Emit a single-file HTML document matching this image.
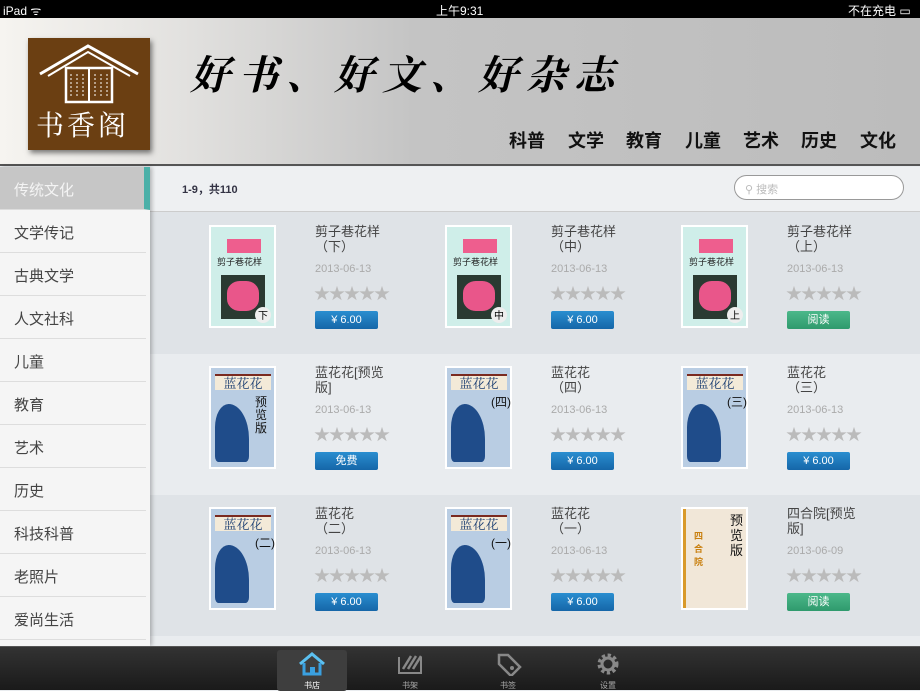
<!DOCTYPE html>
<html><head><meta charset="utf-8"><style>
*{margin:0;padding:0;box-sizing:border-box}
body{width:920px;height:690px;overflow:hidden;position:relative;font-family:"Liberation Sans","Noto Sans CJK SC",sans-serif;background:#e9ecef}
.abs{position:absolute}
#status{left:0;top:0;width:920px;height:18px;background:#000;color:#fff;font-size:12px}
#header{left:0;top:18px;width:920px;height:148px;background:linear-gradient(90deg,#f6f4f0 0%,#e2e1df 20%,#c4c4c4 45%,#bcbcbc 100%);border-bottom:2px solid #555}
.nav{font-size:18px;color:#111;top:112px;font-weight:bold;white-space:nowrap;line-height:22px}
#side{left:0;top:167px;width:150px;height:479px;background:#f5f5f5;box-shadow:2px 0 4px rgba(0,0,0,.25)}
.si{position:absolute;left:0;width:146px;height:43px;border-bottom:1px solid #ddd;font-size:15px;color:#444;padding:12px 0 0 14px}
.row{position:absolute;left:150px;width:770px}
.cov{position:absolute;width:67px;height:103px;background:#fff;padding:2px}
.tt{position:absolute;font-size:13px;color:#444;line-height:15px;width:80px}
.dt{position:absolute;font-size:11px;color:#aaa}
.st{position:absolute;font-size:16px;color:#bbb;letter-spacing:-1px}
.bt{position:absolute;width:63px;height:18px;border-radius:2px;background:linear-gradient(#2a8ed0,#1566a8);color:#fff;font-size:11px;text-align:center;line-height:18px}
.bt.g{background:linear-gradient(#4cb88a,#2f9a6d)}
#tab{left:0;top:646px;width:920px;height:44px;background:linear-gradient(#333,#1a1a1a);border-top:1px solid #555}
.tl{position:absolute;top:33px;font-size:8px;color:#aaa}
</style></head><body>
<div id="status" class="abs"><span class="abs" style="left:3px;top:2px">iPad ᯤ</span><span class="abs" style="left:436px;top:2px">上午9:31</span><span class="abs" style="left:848px;top:2px">不在充电 ▭</span></div>
<div id="header" class="abs">
<div class="abs" style="left:28px;top:20px;width:122px;height:112px;background:#6b3f12;box-shadow:2px 3px 5px rgba(0,0,0,.5)">
<svg width="122" height="112" viewBox="0 0 122 112"><path d="M12 36 L60 8 L110 36" fill="none" stroke="#fff" stroke-width="3"/><path d="M20 38 L60 14 L102 38" fill="none" stroke="#fff" stroke-width="2"/><rect x="38" y="30" width="46" height="34" fill="none" stroke="#fff" stroke-width="2.5"/><line x1="61" y1="30" x2="61" y2="64" stroke="#fff" stroke-width="2"/><path d="M43 36v24M49 36v24M55 36v24M67 36v24M73 36v24M79 36v24" stroke="#fff" stroke-width="1" stroke-dasharray="2 2"/></svg>
<span class="abs" style="left:8px;top:70px;font-size:28px;line-height:32px;color:#fff;font-family:'Noto Serif CJK SC',serif;letter-spacing:3px">书香阁</span></div>
<div class="abs" style="left:190px;top:26px;font-size:40px;color:#000;font-family:'Noto Serif CJK SC',serif;letter-spacing:8px;font-style:italic;font-weight:bold">好书、好文、好杂志</div>
<span class="abs nav" style="left:509px">科普</span><span class="abs nav" style="left:568px">文学</span><span class="abs nav" style="left:626px">教育</span><span class="abs nav" style="left:685px">儿童</span><span class="abs nav" style="left:743px">艺术</span><span class="abs nav" style="left:801px">历史</span><span class="abs nav" style="left:860px">文化</span>
</div>
<div class="abs" style="left:150px;top:167px;width:770px;height:45px;background:#eef0f2;border-bottom:1px solid #ccc"><span class="abs" style="left:32px;top:14px;font-size:11px;font-weight:bold;color:#334">1-9，共110</span>
<div class="abs" style="left:584px;top:8px;width:170px;height:25px;border:1px solid #999;border-radius:13px;background:#fff;font-size:11px;color:#bbb;padding:5px 0 0 10px">⚲ 搜索</div></div>
<div class="row" style="top:212px;height:142px;background:#dfe3e7"></div>
<div class="row" style="top:354px;height:141px;background:#e9ecef"></div>
<div class="row" style="top:495px;height:141px;background:#dfe3e7"></div>
<div class="row" style="top:636px;height:10px;background:#e9ecef"></div>
<div id="side" class="abs">
<div class="si" style="top:0;background:#c6c6c6;color:#f4f4f4;width:150px;border-right:6px solid #4bb0a8">传统文化</div>
<div class="si" style="top:43px">文学传记</div><div class="si" style="top:86px">古典文学</div><div class="si" style="top:129px">人文社科</div><div class="si" style="top:172px">儿童</div><div class="si" style="top:215px">教育</div><div class="si" style="top:258px">艺术</div><div class="si" style="top:301px">历史</div><div class="si" style="top:344px">科技科普</div><div class="si" style="top:387px">老照片</div><div class="si" style="top:430px">爱尚生活</div>
</div>
<div id="books"></div>
<script>
var data=[
["剪子巷花样<br>（下）","2013-06-13","¥ 6.00",0,"下"],["剪子巷花样<br>（中）","2013-06-13","¥ 6.00",0,"中"],["剪子巷花样<br>（上）","2013-06-13","阅读",0,"上"],
["蓝花花[预览<br>版]","2013-06-13","免费",1,"预览版"],["蓝花花<br>（四）","2013-06-13","¥ 6.00",1,"(四)"],["蓝花花<br>（三）","2013-06-13","¥ 6.00",1,"(三)"],
["蓝花花<br>（二）","2013-06-13","¥ 6.00",1,"(二)"],["蓝花花<br>（一）","2013-06-13","¥ 6.00",1,"(一)"],["四合院[预览<br>版]","2013-06-09","阅读",2,"预览版"]];
var h="";
data.forEach(function(d,i){var x=209+(i%3)*236,y=225+Math.floor(i/3)*141;
var c;
if(d[3]==0)c='<div style="width:63px;height:99px;background:#cfeee9;position:relative"><div style="position:absolute;left:16px;top:12px;width:34px;height:14px;background:#ee5e8e"></div><div style="position:absolute;left:6px;top:28px;font-size:9px;color:#222">剪子巷花样</div><div style="position:absolute;left:10px;top:48px;width:44px;height:44px;background:#2a3a32"><div style="margin:6px;width:32px;height:30px;background:#e9568a;border-radius:40%"></div></div><div style="position:absolute;left:44px;top:80px;width:16px;height:16px;border-radius:8px;background:#eee;font-size:10px;text-align:center">'+d[4]+'</div></div>';
else if(d[3]==1)c='<div style="width:63px;height:99px;background:#b9cde3;position:relative"><div style="position:absolute;left:4px;top:6px;width:56px;height:16px;background:#f3ead8;border-top:2px solid #7a2a20;font-size:13px;font-family:Noto Serif CJK SC,serif;color:#14386e;line-height:14px;text-align:center">蓝花花</div><div style="position:absolute;left:4px;top:36px;width:34px;height:58px;background:#1f4c8a;border-radius:40% 60% 10% 10%"></div><div style="position:absolute;left:44px;top:28px;width:14px;font-size:12px;line-height:13px;color:#111">'+d[4]+'</div></div>';
else c='<div style="width:63px;height:99px;background:#f1e7d8;position:relative;border-left:3px solid #d99a2a"><div style="position:absolute;left:8px;top:20px;font-size:9px;width:10px;color:#c98010;font-weight:bold">四合院</div><div style="position:absolute;left:44px;top:4px;width:14px;font-size:13px;line-height:15px;color:#111">预览版</div></div>';
h+='<div class="cov" style="left:'+x+'px;top:'+y+'px">'+c+'</div>';
h+='<div class="tt" style="left:'+(x+106)+'px;top:'+(y-1)+'px">'+d[0]+'</div>';
h+='<div class="dt" style="left:'+(x+106)+'px;top:'+(y+38)+'px">'+d[1]+'</div>';
h+='<div class="st" style="left:'+(x+105)+'px;top:'+(y+55)+'px">★★★★★</div>';
h+='<div class="bt'+(d[2]=="阅读"?" g":"")+'" style="left:'+(x+106)+'px;top:'+(y+86)+'px">'+d[2]+'</div>';
});
document.getElementById("books").innerHTML=h;
</script>
<div id="tab" class="abs">
<div class="abs" style="left:277px;top:3px;width:70px;height:41px;background:#3e3e3e;border-radius:3px"></div>
<svg class="abs" style="left:298px;top:5px" width="28" height="24"><path d="M2 12 L14 2 L26 12" fill="none" stroke="#5bc0f0" stroke-width="3"/><path d="M6 11 V22 H22 V11" fill="none" stroke="#3aa0e0" stroke-width="3"/><rect x="12" y="15" width="5" height="7" fill="#3aa0e0"/></svg>
<span class="tl" style="left:304px;color:#fff">书店</span>
<svg class="abs" style="left:397px;top:6px" width="26" height="22"><path d="M2 4 V20 H24 V4" fill="none" stroke="#888" stroke-width="2"/><path d="M6 16 L14 3 M11 16 L19 3 M16 16 L24 3" stroke="#888" stroke-width="2.5"/></svg>
<span class="tl" style="left:402px">书架</span>
<svg class="abs" style="left:496px;top:5px" width="26" height="24"><path d="M3 3 H12 L24 15 L15 24 L3 12 Z" fill="none" stroke="#888" stroke-width="2.5"/><circle cx="16" cy="16" r="2" fill="#888"/></svg>
<span class="tl" style="left:500px">书签</span>
<svg class="abs" style="left:595px;top:4px" width="26" height="26"><circle cx="13" cy="13" r="8" fill="none" stroke="#888" stroke-width="5" stroke-dasharray="3 2.3"/><circle cx="13" cy="13" r="6" fill="none" stroke="#888" stroke-width="3"/></svg>
<span class="tl" style="left:600px">设置</span>
</div>
</body></html>
